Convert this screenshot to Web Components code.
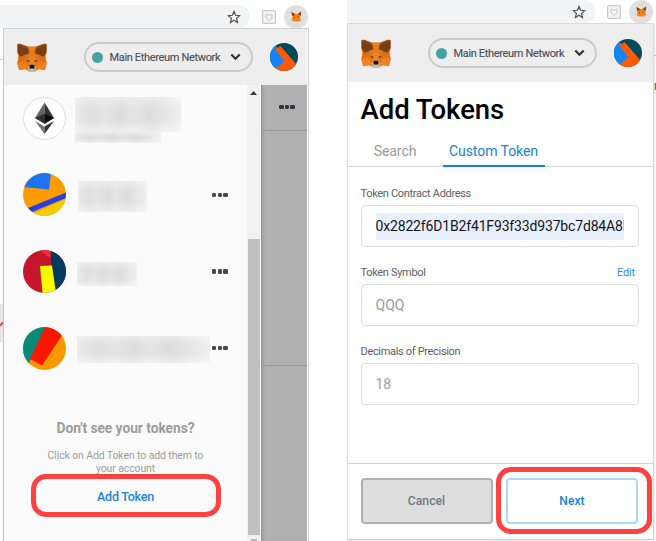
<!DOCTYPE html>
<html lang="en"><head><meta charset="utf-8"><title>MetaMask – Add Tokens</title>
<style>
body{margin:0;background:#fff;font-family:Roboto,"Liberation Sans",sans-serif;width:656px;height:541px;overflow:hidden}
</style></head><body>
<token-guide></token-guide>
<script>
function define(name, html){
  const t=document.createElement('template'); t.innerHTML=html;
  customElements.define(name, class extends HTMLElement{
    constructor(){super();this.attachShadow({mode:'open'}).appendChild(t.content.cloneNode(true));}
  });
}

define('fox-logo',`<style>:host{display:block;flex:none;width:30px;height:29px}svg{display:block;width:100%;height:100%}</style>
<svg viewBox="0 0 30 29">
<path d="M.5 1 3 .7 10.500 3.500h9L27 .7 29.500 1 29.700 9l-1.200 6 1.300 5-1.800 7.300-6-1.300L18 28.500h-6L8 26l-6 1.300L.2 20 1.500 15 .3 9Z" fill="#e87a1d"/>
<path d="M.5 1 11 5.500 12.500 10 3.500 14 .5 9ZM29.500 1 19 5.500 17.500 10l9 4L29.500 9Z" fill="#763d16"/>
<path d="M.5 1 3 .7 10.500 3.500 12 7ZM29.500 1 27 .7 19.500 3.500 18 7Z" fill="#8f4c1c"/>
<path d="m11 3.700 4 6.300 4-6.300Z" fill="#e8801f"/><path d="m12 10 3 5 3-5 2 7-2 7h-6l-2-7Z" fill="#ec8222"/>
<path d="m2 14 7-2-2 6-6.500 2ZM28 14l-7-2 2 6 6.500 2Z" fill="#df6c12"/>
<path d="m.5 20 7-1.500 4 4.500-3 3-6 1ZM29.500 20l-7-1.500-4 4.500 3 3 6 1Z" fill="#f07f1d"/>
<path d="M9 13.500 2 14M21 13.500l7 .5M7.500 18.500l5 5M22.500 18.500l-5 5M12 6v5l-2 6M18 6v5l2 6" fill="none" stroke="#b95d16" stroke-width=".5"/>
<path d="m8.500 17 4 .8-.7 1.500ZM21.500 17l-4 .8.700 1.500Z" fill="#233447"/>
<path d="m10.500 24.500 2-1.500h5l2 1.500L18 28.500h-6Z" fill="#c8b9a9"/>
<path d="m12.800 22.500.6-.7h3.200l.6.700.5 3h-5.400Z" fill="#17130f"/></svg>`);

define('browser-bar',`<style>
:host{display:flex;height:23px;align-items:center}
.omni{flex:none;width:var(--omni);height:23px;background:#f1f3f4;border-radius:0 12px 12px 0;display:flex;align-items:center;justify-content:flex-end;box-sizing:border-box;padding-right:9px}
.star{width:14px;height:14px}
.shield{flex:none;margin-left:12px;width:14px;height:14px}
.ext{margin:0 0 0 var(--ext);flex:none;width:24px;height:24px;border-radius:50%;background:#e0e0e0;display:flex;align-items:center;justify-content:center}
</style><div class="omni"><svg class="star" viewBox="0 0 14 14"><path d="m7 1.500 1.600 3.800 4.100.4-3.100 2.700.9 4L7 10.300l-3.500 2.100.9-4-3.100-2.700 4.100-.4Z" fill="#fff" fill-opacity=".4" stroke="#4c4f53" stroke-width="1.200"/></svg></div>
<svg class="shield" viewBox="0 0 14 14"><rect x=".6" y=".6" width="12.800" height="12.800" rx="1.500" fill="#f4f4f4" stroke="#c9c9c9" stroke-width="1.200"/><path d="m4 4 3 1.300L10 4v4.200L7 10.500 4 8.200Z" fill="none" stroke="#c9c9c9"/></svg>
<div class="ext"><svg width="11" height="11" viewBox="0 0 11 11"><path d="m.5 1 3.500 2h2L10 .5V5L9 6l1 3-1.500 1.500h-6L.5 9l1-2.500Z" fill="#f58220"/><path d="m.5 1 3.500 2-1.500 2L1 4.500ZM10 .5 7 3l1.500 1.500L10 4Z" fill="#84420f"/><path d="M3 6.500h1M6.500 6h1" stroke="#5a2c0b"/></svg></div>`);

define('network-pill',`<style>
:host{display:flex;flex:none;align-items:center;box-sizing:border-box;width:169px;height:30px;border:2px solid #cbcbcb;border-radius:15px;padding-left:6px}
i{flex:none;width:11px;height:11px;border-radius:50%;background:#45a3a5}
span{flex:none;margin-left:7px;padding-top:1px;font-size:11px;letter-spacing:-.34px;line-height:16px;color:#4c5157;white-space:nowrap;width:111.500px;-webkit-text-stroke:.15px #4c5157}
svg{flex:none;margin-left:8.500px}
</style><i></i><span><slot></slot></span><svg width="11" height="8" viewBox="0 0 11 8"><path d="m1.300 1.500 4.200 4.200 4.200-4.200" fill="none" stroke="#2f3336" stroke-width="2.200"/></svg>`);

define('account-avatar',`<style>:host{display:block;flex:none;width:28px;height:28px;border-radius:50%;overflow:hidden}svg{display:block}</style>
<svg width="28" height="28" viewBox="0 0 28 28"><path fill="#03495c" d="M0 0h28v28H0z"/><path d="M0 0h4L15.500 17 6 28H0Z" fill="#1683f7"/><path d="M5 6.500 10.500 3 27 22v6H4l2-2.500 8.500-7.500Z" fill="#fa5a02"/></svg>`);

define('wallet-header',`<style>
:host{display:flex;align-items:center;background:#eee;box-sizing:border-box;padding-left:12.500px}
network-pill{margin-left:37px}account-avatar{margin-left:17px}
</style><fox-logo></fox-logo><network-pill>Main Ethereum Network</network-pill><account-avatar></account-avatar>`);

define('more-dots',`<style>:host{display:flex;gap:1.300px}i{width:4.300px;height:4.600px;border-radius:1.300px;background:var(--dot,#47484c)}</style><i></i><i></i><i></i>`);

define('token-row',`<style>
:host{display:flex;align-items:center;height:76.600px;padding-left:19px;box-sizing:border-box;width:243px}
.icon{width:43px;height:43px;flex:none}
.icon ::slotted(svg){display:block;width:43px;height:43px}
.name{flex:1;padding-left:var(--inset,14px)}
more-dots{margin-right:19.500px}
:host([plain]) more-dots{display:none}
</style><div class="icon"><slot name="icon"></slot></div><div class="name"><slot></slot></div><more-dots></more-dots>`);

define('masked-text',`<style>:host{display:block;width:var(--w);height:var(--h);background:linear-gradient(180deg,#fbfbfb66,#fbfbfb00 35%,#fbfbfb00 65%,#fbfbfb88),linear-gradient(90deg,#ebebeb,#dfdfdf 15%,#e4e4e4 28%,#dddddd 43%,#e4e4e4 55%,#dddddd 70%,#e5e5e5 84%,#f0f0f0)}</style>`);

define('scroll-track',`<style>
:host{display:flex;flex-direction:column;align-items:center;width:14px;background:#f0f2f1;box-sizing:border-box;border-right:1px solid #fbfbfb}
.up{height:154px;padding-top:6px;box-sizing:border-box}.thumb{width:12px;height:296px;background:#c0c0c0}.down{padding-top:4px}
svg{display:block}
</style><div class="up"><svg width="7" height="4" viewBox="0 0 7 4"><path d="m0 4 3.500-4L7 4Z" fill="#3e3e3e"/></svg></div><div class="thumb"></div><div class="down"><svg width="6" height="2"><path d="M0 0h6v2H0z" fill="#b4b4b4"/></svg></div>`);

define('add-prompt',`<style>
:host{display:flex;flex-direction:column;align-items:center;text-align:center;color:#9b9b9b}
h2{margin:0;font-size:13.800px;letter-spacing:-.05px;line-height:20px;font-weight:700}
p{margin:12px 0 0;font-size:10.500px;letter-spacing:-.12px;line-height:12.700px}
.ring{margin-top:-1px;width:190px;height:43px;box-sizing:border-box;border:5px solid #fd4040;border-radius:15px;display:flex;align-items:center;justify-content:center;color:#1b83dc;font-size:12.500px;letter-spacing:-.25px;font-weight:500;padding-top:1px}
</style><h2>Don't see your tokens?</h2><p>Click on Add Token to add them to<br>your account</p><div class="ring">Add Token</div>`);

define('token-drawer',`<style>
:host{display:flex;height:456px}
.drawer{width:243px;flex:none;background:#fbfbfb;overflow:hidden}
.list{margin-top:-5px}
.shade{flex:1;background:#b1b1b1;border-left:1px solid #949494;box-shadow:inset 2px 0 2px #a3a3a3}
.cell{height:46px;border-bottom:1px solid #979797;display:flex;align-items:center;justify-content:center;padding-left:5px;padding-bottom:1px;box-sizing:border-box;--dot:#35343a}
.gap{height:234px;border-bottom:1px solid #979797}
add-prompt{margin-top:31.500px}
</style>
<div class="drawer"><div class="list">
<token-row plain style="--inset:9px"><svg slot="icon" viewBox="0 0 43 43"><circle cx="21.500" cy="21.500" r="21" fill="#fff" stroke="#dcdcdc"/><path d="M21.500 5.500 12 21l9.500 6Z" fill="#646464"/><path d="M21.500 5.500 31 21l-9.500 6Z" fill="#333"/><path d="M12 21l9.500-4.200v9.700Z" fill="#303030"/><path d="m31 21-9.500-4.200v9.700Z" fill="#100c0d"/><path d="M12 24l9.500 5.500V37Z" fill="#777"/><path d="m31 24-9.500 5.500V37Z" fill="#333"/></svg>
<masked-text style="--w:106px;--h:35px;margin-top:3px"></masked-text><masked-text style="--w:86px;--h:11px"></masked-text></token-row>
<token-row style="--inset:12px"><svg slot="icon" viewBox="0 0 43 43"><clipPath id="a"><circle cx="21.500" cy="21.500" r="21.500"/></clipPath><g clip-path="url(#a)"><path fill="#fd9c00" d="M0 0h43v43H0z"/><path d="M0 0h28l-2 16.500L0 14Z" fill="#1d72f0"/><path d="m0 45 45-20v20Z" fill="#f3cb00"/><path d="M5 35 43 19.500V25L9 39Z" fill="#2340e2"/></g></svg><masked-text style="--w:69px;--h:31px;margin-top:3px"></masked-text></token-row>
<token-row style="--inset:11px"><svg slot="icon" viewBox="0 0 43 43"><clipPath id="b"><circle cx="21.500" cy="21.500" r="21.500"/></clipPath><g clip-path="url(#b)"><path fill="#c5162b" d="M0 0h43v43H0z"/><path d="m17 0 10 8 1-8Z" fill="#fa2a37"/><path d="M27.500 0H43v43H33L28 12Z" fill="#033a5d"/><path d="M17 16l12-.5L33 43H19.500Z" fill="#f8f800"/></g></svg><masked-text style="--w:60px;--h:24px;margin-top:5px"></masked-text></token-row>
<token-row style="--inset:11px"><svg slot="icon" viewBox="0 0 43 43"><clipPath id="c"><circle cx="21.500" cy="21.500" r="21.500"/></clipPath><g clip-path="url(#c)"><path fill="#f79800" d="M0 0h43v43H0z"/><path d="M0 0h23L6 36H0Z" fill="#078b78"/><path d="M23-2 40 7 19 38.500 7 32Z" fill="#fa1700"/></g></svg><masked-text style="--w:133px;--h:27px;margin-top:2px"></masked-text></token-row>
</div><add-prompt></add-prompt></div>
<scroll-track></scroll-track><div class="shade"><div class="cell"><more-dots></more-dots></div><div class="gap"></div></div>`);

define('tab-strip',`<style>
:host{display:flex;padding-left:12.500px;border-bottom:1px solid #d4d8db;height:34px;box-sizing:border-box;font-size:14.100px;letter-spacing:-.1px;line-height:20px;color:#9b9b9b}
div{height:34px;box-sizing:border-box;padding:8px 0 0;text-align:center;white-space:nowrap}
.a{width:69px}.b{margin-left:13px;width:102px;color:#1b83dc;border-bottom:2px solid #1480df}
</style><div class="a">Search</div><div class="b">Custom Token</div>`);

define('form-field',`<style>
:host{display:block;margin:0 14px 0 12.500px}
.cap{display:flex;justify-content:space-between;font-size:11px;letter-spacing:-.32px;line-height:14px;color:#5d6064;padding-right:4px;position:relative;top:1px}
.cap ::slotted(a){color:#2c8ce4;letter-spacing:-.15px}
.box{margin-top:5px;height:42px;box-sizing:border-box;border:1px solid #dedfe1;border-radius:4px;padding:6.500px 14px;font-size:14px;line-height:26px;color:#9b9b9b}
.val{overflow:hidden;white-space:nowrap;height:27px}
:host([filled]) .val{background:#e8f0fe;color:#14161a;letter-spacing:-.16px}
</style><div class="cap"><slot name="label"></slot><slot name="action"></slot></div><div class="box"><div class="val"><slot></slot></div></div>`);

define('action-bar',`<style>
:host{display:flex;border-top:1px solid #d2d3d5;padding:14px 0 0 12.500px;height:76px;box-sizing:border-box;position:relative;font-size:12.200px;font-weight:500}
div{box-sizing:border-box;width:132px;height:46px;border-radius:4px;border:2px solid #b0b0b0;background:#dedede;color:#6c7a87;display:flex;align-items:center;justify-content:center}
.n{margin-left:13.500px;background:#fff;border-color:#b0d7f5;color:#1b83dc}
i{position:absolute;left:148px;top:3px;width:156px;height:67px;box-sizing:border-box;border:5px solid #fd4040;border-radius:15px}
</style><div>Cancel</div><div class="n">Next</div><i></i>`);

define('token-form',`<style>
:host{display:block;height:457px;background:#fff}
h1{margin:0;padding:10px 0 0 12.500px;font-size:27.500px;line-height:36px;font-weight:500;letter-spacing:-.05px;color:#000;height:51px;box-sizing:border-box}
form-field{padding-top:19px}form-field + form-field{padding-top:18px}
action-bar{margin-top:57.500px}
</style><h1>Add Tokens</h1><tab-strip></tab-strip>
<form-field filled><span slot="label">Token Contract Address</span>0x2822f6D1B2f41F93f33d937bc7d84A8D</form-field>
<form-field><span slot="label">Token Symbol</span><a slot="action">Edit</a>QQQ</form-field>
<form-field><span slot="label">Decimals of Precision</span>18</form-field>
<action-bar></action-bar>`);

define('page-edge',`<style>:host{display:flex;flex-direction:column;width:3px;overflow:hidden;flex:none}
.l{height:1px;background:#c5c7c9;margin-top:59px}.g{height:38px;margin-top:244px;background:#e6e6e6;padding-top:18px;box-sizing:border-box}.g svg{display:block}
.t{margin-top:22px;font-size:13px;line-height:15px;color:#555;height:15px}
:host([right]) .g,:host(:not([right])) .t{display:none}:host([right]) .l{margin-top:55px}
</style><div class="l"></div><div class="g"><svg width="3" height="5"><path d="m0 4 3-4" stroke="#e83a35" stroke-width="1.800"/></svg></div><div class="t">n</div>`);

define('token-guide',`<style>
:host{display:flex;width:656px;height:541px}
.one{width:347px;padding-top:5px;box-sizing:border-box;height:541px;overflow:hidden}
.two{width:309px;height:541px}
.one browser-bar{--omni:250px;--ext:8px}.two browser-bar{--omni:248px;--ext:8px}
.row{display:flex}
.pop{box-sizing:border-box}
.one .pop{width:306px;height:513px;border:1px solid #d2d2d2;border-left:1.500px solid #c8c8c8;border-bottom:0;padding-right:1px}
.two .pop{width:307px;height:517px;border:1px solid #d9d9d9;border-bottom:2px solid #d0d0d0;box-shadow:1px 1px 1px #0001}
.one wallet-header{height:56px}.two wallet-header{height:58px}
</style>
<div class="one"><browser-bar></browser-bar><div class="row"><page-edge style="margin-top:-28px"></page-edge><div class="pop"><wallet-header></wallet-header><token-drawer></token-drawer></div></div></div>
<div class="two"><browser-bar></browser-bar><div class="row"><div class="pop"><wallet-header></wallet-header><token-form></token-form></div><page-edge right style="margin-top:-23px"></page-edge></div></div>`);
</script></body></html>
